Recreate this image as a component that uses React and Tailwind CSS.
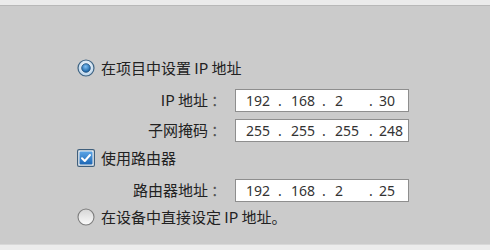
import React from "react";

const RadioOn = () => (
  <svg width="18" height="18" viewBox="0 0 18 18">
    <defs>
      <radialGradient id="ron" cx="50%" cy="40%" r="60%">
        <stop offset="0%" stopColor="#ffffff" />
        <stop offset="100%" stopColor="#b9d3ea" />
      </radialGradient>
      <radialGradient id="dot" cx="45%" cy="35%" r="65%">
        <stop offset="0%" stopColor="#7fc0f4" />
        <stop offset="100%" stopColor="#145c9e" />
      </radialGradient>
    </defs>
    <circle cx="9" cy="9" r="8" fill="url(#ron)" stroke="#3f6483" strokeWidth="1.2" />
    <circle cx="9" cy="9" r="4.3" fill="url(#dot)" stroke="#1d4f7c" strokeWidth="0.8" />
  </svg>
);

const RadioOff = () => (
  <svg width="18" height="18" viewBox="0 0 18 18">
    <defs>
      <linearGradient id="roff" x1="0" y1="0" x2="0" y2="1">
        <stop offset="0%" stopColor="#d6d6d6" />
        <stop offset="100%" stopColor="#fbfbfb" />
      </linearGradient>
    </defs>
    <circle cx="9" cy="9" r="8" fill="url(#roff)" stroke="#7d7d7d" strokeWidth="1.1" />
  </svg>
);

const CheckOn = () => (
  <svg width="18" height="18" viewBox="0 0 18 18">
    <defs>
      <linearGradient id="chk" x1="0" y1="0" x2="0" y2="1">
        <stop offset="0%" stopColor="#5aa4e6" />
        <stop offset="100%" stopColor="#1d66b4" />
      </linearGradient>
    </defs>
    <rect x="0.6" y="0.6" width="16.8" height="16.8" rx="1.5" fill="#e9eef3" stroke="#3f5f7c" strokeWidth="1.2" />
    <rect x="2.5" y="2.5" width="13" height="13" rx="1" fill="url(#chk)" />
    <path d="M5 9.2 L7.8 12 L13 6" fill="none" stroke="#ffffff" strokeWidth="2" strokeLinecap="round" strokeLinejoin="round" />
  </svg>
);

const IpBox = ({ parts }) => (
  <div className="w-[174px] h-[23px] bg-white border border-[#8e8e8e] flex items-center pl-[10px] text-[14px] text-[#333] font-['Noto_Sans',sans-serif]">
    <span className="w-[30px]">{parts[0]}</span>
    <span className="w-[8px] text-center">.</span>
    <span className="w-[36px] pl-[7px]">{parts[1]}</span>
    <span className="w-[8px] text-center">.</span>
    <span className="w-[39px] pl-[7px]">{parts[2]}</span>
    <span className="w-[8px] text-center">.</span>
    <span className="pl-[4px]">{parts[3]}</span>
  </div>
);

const FieldRow = ({ label, parts, className }) => (
  <div className={`flex items-center h-[23px] ${className}`}>
    <span className="w-[131px] text-right">{label}</span>
    <span className="w-[15px] pl-[3px] text-[#555]">：</span>
    <div className="ml-[12px]">
      <IpBox parts={parts} />
    </div>
  </div>
);

export default function App() {
  return (
    <div className="w-[490px] h-[250px] flex flex-col overflow-hidden text-[15px] text-[#222] font-['Noto_Sans_CJK_SC','Noto_Sans',sans-serif]">
      <div className="h-[5px] bg-[#ebebeb] border-b border-[#b8b8b8] box-content" />
      <div className="h-[238px] bg-[#cbcbcb] pl-[77px] pt-[52px] flex flex-col">
        <div className="flex items-center h-[20px] gap-[6px]">
          <RadioOn />
          <span>在项目中设置 IP 地址</span>
        </div>

        <FieldRow className="mt-[11px]" label="IP 地址" parts={["192", "168", "2", "30"]} />
        <FieldRow className="mt-[7px]" label="子网掩码" parts={["255", "255", "255", "248"]} />

        <div className="flex items-center h-[20px] gap-[6px] mt-[6px]">
          <CheckOn />
          <span>使用路由器</span>
        </div>

        <FieldRow className="mt-[11px]" label="路由器地址" parts={["192", "168", "2", "25"]} />

        <div className="flex items-center h-[20px] gap-[6px] mt-[5px]">
          <RadioOff />
          <span>在设备中直接设定 IP 地址。</span>
        </div>
      </div>
      <div className="flex-1 bg-[#ececec] border-t border-[#d8d8d8]" />
    </div>
  );
}
